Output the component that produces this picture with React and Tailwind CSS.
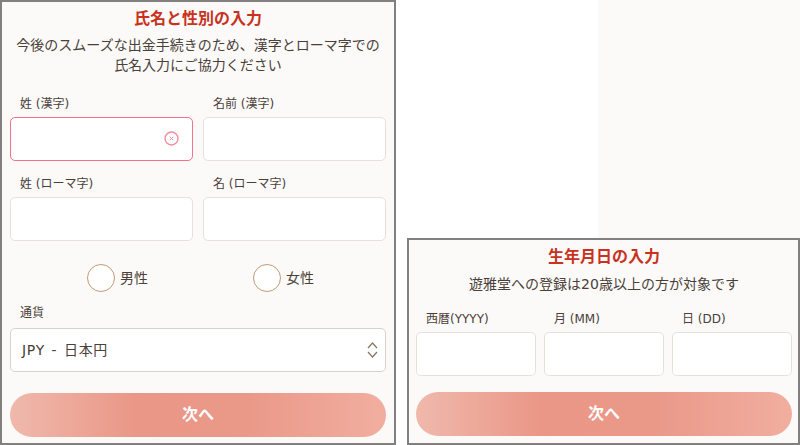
import React from 'react';

const btnClass =
  'h-11 w-full rounded-full bg-[linear-gradient(90deg,#efb9ac_0%,#ea9787_33%,#ea9888_62%,#f1ae9f_100%)] text-base leading-none font-bold text-white';

const Field = ({ label, error, className = '' }) => (
  <div className={`flex flex-col ${className}`}>
    <label className="h-[23px] pl-2.5 text-xs leading-[20px] text-[#4a4038]">{label}</label>
    <div
      className={`relative h-11 rounded-[5px] border bg-white ${
        error ? 'border-[#f7708a]' : 'border-[#e6e1dc]'
      }`}
    >
      {error && (
        <svg
          className="absolute top-[13px] right-[13px] h-[15px] w-[15px]"
          viewBox="0 0 15 15"
          fill="none"
          stroke="#f58a9e"
        >
          <circle cx="7.5" cy="7.5" r="6.5" strokeWidth="1.4" />
          <path d="M5.8 5.8l3.4 3.4M9.2 5.8l-3.4 3.4" strokeWidth="1" />
        </svg>
      )}
    </div>
  </div>
);

const Radio = ({ label }) => (
  <label className="flex items-center gap-[5px] text-sm leading-none text-[#4a4038]">
    <span className="h-7 w-7 rounded-full border-[1.5px] border-[#c49a72] bg-white" />
    {label}
  </label>
);

export default function App() {
  return (
    <div className="flex h-[445px] w-[800px] overflow-hidden bg-white font-['DejaVu_Sans','Noto_Sans_CJK_JP',sans-serif]">
      {/* name + gender step */}
      <div className="h-full w-[396px] border-2 border-[#808080] bg-[#fbfaf8] px-2">
        <h2 className="mt-[6px] text-center text-base leading-[22px] font-bold text-[#c8321f]">
          氏名と性別の入力
        </h2>
        <p className="mt-[5px] text-center text-sm leading-5 text-[#4a4038]">
          今後のスムーズな出金手続きのため、漢字とローマ字での
          <br />
          氏名入力にご協力ください
        </p>
        <div className="mt-[19px] grid grid-cols-2 gap-x-2.5 gap-y-[13px]">
          <Field label="姓 (漢字)" error />
          <Field label="名前 (漢字)" />
          <Field label="姓 (ローマ字)" />
          <Field label="名 (ローマ字)" />
        </div>
        <div className="mt-[23px] flex pl-[77px]">
          <div className="w-[166px]">
            <Radio label="男性" />
          </div>
          <Radio label="女性" />
        </div>
        <label className="mt-[11px] block h-[25px] pl-2.5 text-xs leading-[20px] text-[#4a4038]">通貨</label>
        <div className="flex h-11 items-center justify-between rounded-[5px] border border-[#dcd1c8] bg-white pr-[7px] pl-[11px] text-sm tracking-[0.7px] [word-spacing:1.5px] text-[#4a4038]">
          <span>JPY - 日本円</span>
          <svg className="h-4 w-[11px]" viewBox="0 0 11 16" fill="none" stroke="#857565" strokeWidth="1.2">
            <path d="M1 6l4.5-5L10 6M1 10l4.5 5L10 10" />
          </svg>
        </div>
        <button className={`mt-[21px] ${btnClass}`}>次へ</button>
      </div>

      <div className="flex flex-1 flex-col">
        <div className="flex h-[238px]">
          <div className="w-[202px]" />
          <div className="flex-1 bg-[#fbfaf8]" />
        </div>
        {/* birthday step */}
        <div className="ml-[11px] h-[207px] border-2 border-[#808080] bg-[#fbfaf8] pr-[6px] pl-[7px]">
          <h2 className="mt-[6px] text-center text-base leading-[22px] font-bold text-[#c8321f]">
            生年月日の入力
          </h2>
          <p className="mt-[6px] text-center text-sm leading-5 text-[#4a4038]">
            遊雅堂への登録は20歳以上の方が対象です
          </p>
          <div className="mt-[15px] grid grid-cols-3 gap-x-2">
            <Field label="西暦(YYYY)" />
            <Field label="月 (MM)" />
            <Field label="日 (DD)" />
          </div>
          <button className={`mt-4 ${btnClass}`}>次へ</button>
        </div>
      </div>
    </div>
  );
}
